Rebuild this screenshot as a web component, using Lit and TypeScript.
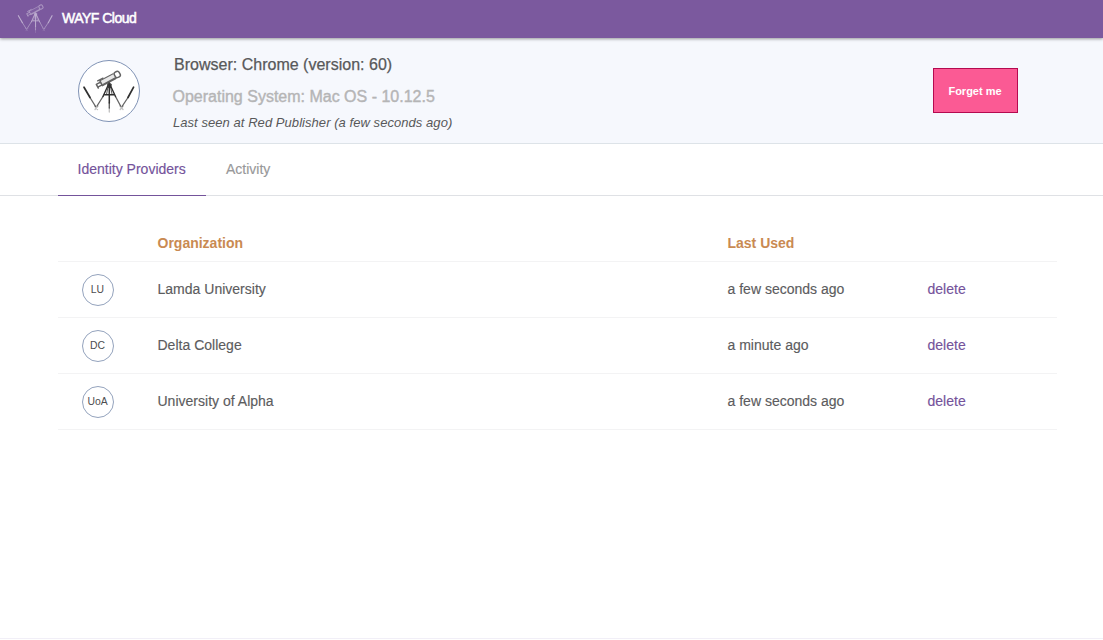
import { LitElement, html, css } from "lit";
import { customElement, property } from "lit/decorators.js";

@customElement("wayf-logo")
class WayfLogo extends LitElement {
  static styles = css`
    :host { display: block; }
    svg { display: block; width: 100%; height: 100%; }
    .line { fill: none; stroke: currentColor; stroke-linecap: round; }
    .fade { opacity: 0.3; }
    .soft { opacity: 0.75; }
  `;
  render() {
    return html`<svg viewBox="4 10 54 44">
      <g class="line">
        <path d="M6 27.2 L12 37.5" stroke-width="1.7" />
        <path class="soft" d="M12 37.5 L17.6 46.5" stroke-width="1.3" />
        <path d="M25 36.5 L30.2 25" stroke-width="1.4" />
        <path class="soft" d="M19 46 L25 36.5" stroke-width="1.3" />
        <path d="M32.2 25 L37.5 36.5" stroke-width="1.4" />
        <path class="soft" d="M37.5 36.5 L42.6 46" stroke-width="1.3" />
        <path class="soft" d="M44 46.5 L50 37.5" stroke-width="1.3" />
        <path d="M50 37.5 L55.6 27.2" stroke-width="1.7" />
        <path d="M31.3 24 V43" stroke-width="1.5" />
        <path class="soft" d="M31.3 43 V48" stroke-width="1.4" />
        <path d="M26.5 34.8 H36" stroke-width="1.4" />
        <path d="M30 27 L28.6 34 M32.6 27 L34 34" stroke-width="0.8" />
      </g>
      <g class="line fade" stroke-width="1.3">
        <path d="M17 49.5 L20 46 M16.7 46 L19.5 49.5 M42.2 49.5 L45.2 46 M42 46 L45 49.5 M31.3 48 V52" />
      </g>
      <g class="soft" transform="translate(30.2 19.4) rotate(-28)">
        <rect x="-8" y="-2.8" width="15" height="5.4" fill="currentColor" opacity="0.15" />
        <path class="line" stroke-width="0.9" d="M-8 -2.7 H7" />
        <path class="line" stroke-width="2.1" d="M-7 2.4 H7" />
        <rect class="line" stroke-width="1.5" x="7.6" y="-3.1" width="5.4" height="6" rx="2" />
        <path class="line" stroke-width="1.5" d="M-8 -2.6 V2.8 M-12.4 -1.2 H-8 M-12.8 2 H-8 M-12.8 -1.2 V3" />
        <path class="line" stroke-width="1.3" d="M-10 -3.6 H-4" />
      </g>
      <path d="M29 24 L31.3 22 L34 24.5 L32.8 28 H30 Z" fill="currentColor" opacity="0.85" />
    </svg>`;
  }
}

@customElement("provider-row")
class ProviderRow extends LitElement {
  @property() code = "";
  @property() name = "";
  @property() used = "";
  static styles = css`
    :host {
      display: grid; grid-template-columns: 99.5px 570px 200px 1fr;
      align-items: center; height: 55px; border-bottom: 1px solid #f3f3f4;
      font-size: 14px; color: #5c5c5e;
    }
    .cell { padding-bottom: 2px; letter-spacing: 0.01px; -webkit-text-stroke: 0.15px; }
    .badge {
      box-sizing: border-box; width: 32px; height: 32px; margin: 1px 0 0 24px;
      border: 1px solid #94a3bd; border-radius: 50%;
      display: flex; align-items: center; justify-content: center;
      font-size: 10.4px; color: #4d4d4f; padding: 0 1px 1px 0;
    }
    .delete { color: #74539b; }
  `;
  render() {
    return html`<div class="badge">${this.code}</div>
      <div class="cell">${this.name}</div>
      <div class="cell">${this.used}</div>
      <div class="cell delete">delete</div>`;
  }
}

@customElement("app-root")
class AppRoot extends LitElement {
  static styles = css`
    :host {
      display: flex; flex-direction: column; box-sizing: border-box;
      height: 640px; background: #fff; overflow: hidden;
      font-family: "Liberation Sans", Arial, sans-serif; color: #58585a;
    }
    .bar {
      position: relative; height: 38px; flex: none; display: flex; align-items: center;
      background: #7b599e; box-shadow: 0 1px 3px rgba(0, 0, 0, 0.4);
      padding-left: 16.6px; color: #fff;
    }
    .bar wayf-logo { width: 36.7px; height: 29.9px; color: #c9bcd8; opacity: 0.85; }
    .brand {
      margin-left: 8.7px; font-size: 14px; letter-spacing: -0.5px; line-height: 16px;
      padding-bottom: 2px; -webkit-text-stroke: 0.5px; white-space: nowrap;
    }
    .device {
      flex: none; box-sizing: border-box; height: 106px; display: flex;
      background: #f6f8fd; border-bottom: 1px solid #dde3e8; padding: 0 85px 0 78px;
    }
    .avatar {
      box-sizing: border-box; width: 62px; height: 62px; margin-top: 22px;
      border: 1px solid #8093b5; border-radius: 50%; background: #fff;
      display: flex; padding: 9px 3px 0; color: #303030;
    }
    .avatar wayf-logo { width: 54px; height: 44px; }
    .info { flex: 1; margin-left: 33px; padding-top: 17px; white-space: nowrap; }
    .browser { font-size: 16px; line-height: 20px; margin-left: 1px; letter-spacing: 0.01px; -webkit-text-stroke: 0.25px; }
    .os { font-size: 16px; line-height: 20px; margin: 12px 0 0 -0.5px; color: #b5b5b6; -webkit-text-stroke: 0.4px; }
    .seen { font-size: 13px; line-height: 16px; margin-top: 8px; font-style: italic; letter-spacing: 0.055px; }
    .forget {
      box-sizing: border-box; width: 85px; height: 45px; margin-top: 30px; padding: 0 1px 0 0;
      border: 1px solid #b40a50; background: #fb5a94; color: #fff;
      font: bold 11px "Liberation Sans", Arial, sans-serif;
    }
    .tabs {
      flex: none; box-sizing: border-box; height: 52px; display: flex;
      padding-left: 58px; border-bottom: 1px solid #dfe1e5;
    }
    .tab {
      box-sizing: border-box; height: 52px; padding: 0 0 0 20px; font-size: 14px;
      line-height: 51px; color: #98989a; white-space: nowrap; -webkit-text-stroke: 0.15px;
    }
    .active { width: 148px; color: #74539b; border-bottom: 1px solid #74539b; padding-left: 19.6px; }
    .table { flex: 1; padding: 28px 46px 0 58px; }
    .head {
      display: grid; grid-template-columns: 99.5px 570px 1fr; height: 37px;
      border-bottom: 1px solid #f3f3f4; line-height: 38px;
      font-size: 14px; font-weight: bold; color: #c98a52;
    }
    .foot { flex: none; height: 1px; border-top: 1px solid #f1eff7; }
  `;
  render() {
    return html`
      <header class="bar"><wayf-logo></wayf-logo><span class="brand">WAYF Cloud</span></header>
      <section class="device">
        <div class="avatar"><wayf-logo></wayf-logo></div>
        <div class="info">
          <div class="browser">Browser: Chrome (version: 60)</div>
          <div class="os">Operating System: Mac OS - 10.12.5</div>
          <div class="seen">Last seen at Red Publisher (a few seconds ago)</div>
        </div>
        <button class="forget">Forget me</button>
      </section>
      <nav class="tabs">
        <div class="tab active">Identity Providers</div>
        <div class="tab">Activity</div>
      </nav>
      <main class="table">
        <div class="head"><span></span><span>Organization</span><span>Last Used</span></div>
        <provider-row code="LU" name="Lamda University" used="a few seconds ago"></provider-row>
        <provider-row code="DC" name="Delta College" used="a minute ago"></provider-row>
        <provider-row code="UoA" name="University of Alpha" used="a few seconds ago"></provider-row>
      </main>
      <footer class="foot"></footer>
    `;
  }
}
